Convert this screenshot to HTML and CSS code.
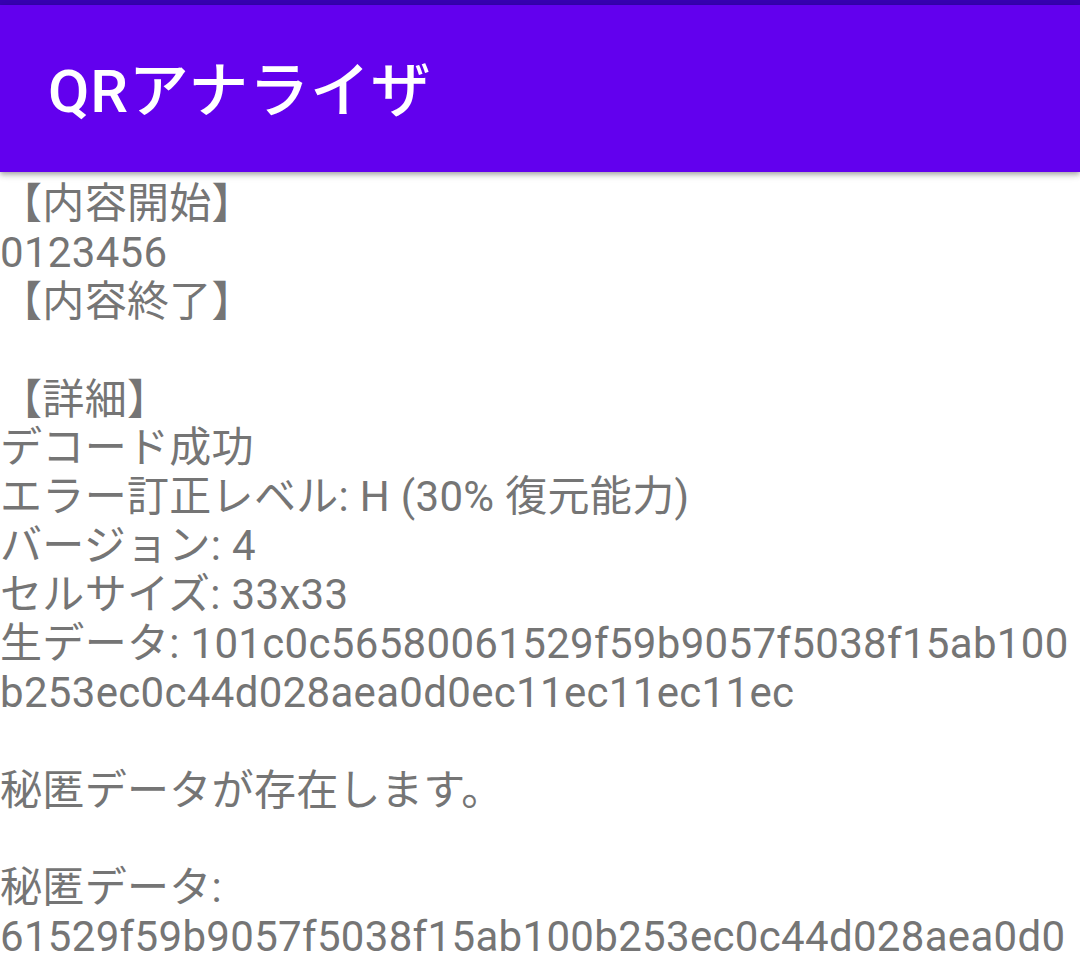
FILE: index.html
```html
<!DOCTYPE html>
<html lang="ja">
<head>
<meta charset="utf-8">
<title>QRアナライザ</title>
<link rel="stylesheet" href="styles.css">
</head>
<body>
<div class="status"></div>
<header class="appbar">
  <h1 class="title">QRアナライザ</h1>
</header>
<main class="content">
  <div class="ln">【内容開始】</div>
  <div class="ln">0123456</div>
  <div class="ln">【内容終了】</div>
  <div class="ln"></div>
  <div class="ln">【詳細】</div>
  <div class="ln">デコード成功</div>
  <div class="ln">エラー訂正レベル: H (30% 復元能力)</div>
  <div class="ln">バージョン: 4</div>
  <div class="ln">セルサイズ: 33x33</div>
  <div class="ln">生データ: 101c0c56580061529f59b9057f5038f15ab100</div>
  <div class="ln">b253ec0c44d028aea0d0ec11ec11ec11ec</div>
  <div class="ln"></div>
  <div class="ln">秘匿データが存在します。</div>
  <div class="ln"></div>
  <div class="ln">秘匿データ:</div>
  <div class="ln">61529f59b9057f5038f15ab100b253ec0c44d028aea0d0</div>
</main>
</body>
</html>
```
FILE: styles.css
```css
html, body {
  margin: 0;
  padding: 0;
  background: #ffffff;
  overflow: hidden;
}
body {
  width: 1080px;
  height: 960px;
  font-family: Roboto, "Noto Sans CJK JP", sans-serif;
}
.status {
  height: 5px;
  background: #3700b3;
}
.appbar {
  position: relative;
  z-index: 1;
  height: 167px;
  background: #6200ee;
  box-shadow: 0 2px 4px -1px rgba(0,0,0,0.2), 0 4px 5px 0 rgba(0,0,0,0.14), 0 1px 10px 0 rgba(0,0,0,0.12);
  box-sizing: border-box;
  padding: 57px 0 0 48px;
}
.title {
  margin: 0;
  font-size: 60px;
  line-height: 60px;
  font-weight: 500;
  letter-spacing: 0.8px;
  color: #ffffff;
  white-space: nowrap;
}
.content {
  padding-top: 8px;
  color: #757575;
  font-size: 42px;
  letter-spacing: 0.32px;
}
.ln {
  height: 48.9px;
  line-height: 48.9px;
  white-space: nowrap;
}
```
